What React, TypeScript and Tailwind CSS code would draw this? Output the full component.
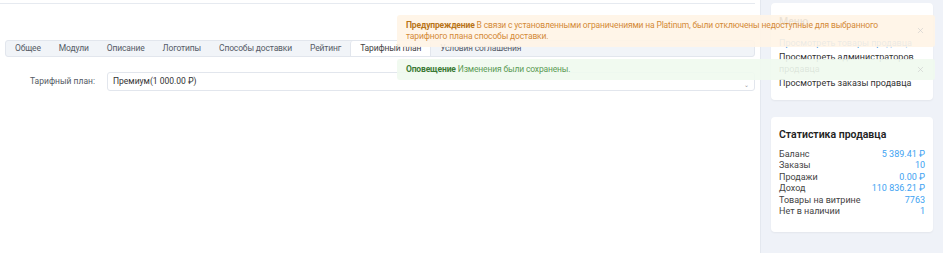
import { X } from 'lucide-react';

const tabs = ['Общее', 'Модули', 'Описание', 'Логотипы', 'Способы доставки', 'Рейтинг', 'Тарифный план', 'Условия соглашения'];

const stats = [
  { label: 'Баланс', value: '5 389.41 ₽' },
  { label: 'Заказы', value: '10' },
  { label: 'Продажи', value: '0.00 ₽' },
  { label: 'Доход', value: '110 836.21 ₽' },
  { label: 'Товары на витрине', value: '7763' },
  { label: 'Нет в наличии', value: '1' },
];

const App = () => {
  return (
    <div className="relative w-[943px] h-[265px] bg-white flex items-start overflow-hidden" style={{ fontFamily: 'Roboto, "Noto Sans", sans-serif' }}>
      {/* Main panel */}
      <div className="w-[760px] h-[253px] pt-[3px] pr-[5px]">
        <div className="h-full border-t border-[#e6eaf0] pt-[36px] pl-[5px]">
          {/* Tabs */}
          <div className="flex h-[17px] items-stretch bg-[#f1f4f8] border border-[#e2e6ed] rounded-[3px] text-[8.5px] tracking-[-0.15px] text-[#555b66]">
            {tabs.map((t) => (
              <div
                key={t}
                className={`px-[9px] flex items-center leading-none whitespace-nowrap ${
                  t === 'Тарифный план' ? 'bg-white rounded-t-[3px] border-x border-[#e2e6ed] text-[#444]' : ''
                }`}
              >
                {t}
              </div>
            ))}
          </div>

          {/* Form row */}
          <div className="flex items-center mt-[15px]">
            <div className="w-[90px] text-right text-[8.5px] text-[#555b66]">Тарифный план:</div>
            <div className="ml-[12px] flex-1 h-[19px] border border-[#e2e6ed] rounded-[3px] flex items-center justify-between pl-[5px] pr-[5px] text-[8.5px] text-[#333]">
              <span>Премиум(1 000.00 ₽)</span>
              <span className="text-[6px] text-[#999] mt-[6px]">⌄</span>
            </div>
          </div>
        </div>
      </div>

      {/* Sidebar */}
      <div className="w-[183px] h-[253px] bg-[#eff2f8] border-l border-[#e4e8ef] px-[10px] pt-[3px] flex flex-col gap-[17px]">
        <div className="bg-white rounded-[4px] shadow-[0_1px_2px_rgba(0,0,0,0.05)] h-[97px] px-[8px] pt-[13px] text-[9px] text-[#333] leading-[12px]">
          <div className="text-[10.5px] font-medium text-[#333] mb-[9px]">Меню</div>
          <div className="text-[#3b8fd9] mb-[2px]">Просмотреть товары продавца</div>
          <div className="mb-[2px]">Просмотреть администраторов продавца</div>
          <div>Просмотреть заказы продавца</div>
        </div>
        <div className="bg-white rounded-[4px] shadow-[0_1px_2px_rgba(0,0,0,0.05)] h-[115px] px-[8px] pt-[10px] pb-[8px] text-[9px] text-[#444]">
          <div className="text-[10.5px] font-semibold text-[#222] mb-[6px]">Статистика продавца</div>
          {stats.map((s) => (
            <div key={s.label} className="flex justify-between leading-[11.5px]">
              <span>{s.label}</span>
              <span className="text-[#3ea2f2]">{s.value}</span>
            </div>
          ))}
        </div>
      </div>

      {/* Toasts */}
      <div className="absolute left-[397px] top-[15px] w-[538px] flex flex-col gap-[12px] text-[8.5px] tracking-[-0.15px]">
        <div className="bg-[#fff4e6]/90 rounded-[3px] pl-[9px] pr-[10px] py-[5px] flex justify-between leading-[11px]">
          <div className="text-[#d48a37] w-[490px]">
            <span className="font-bold text-[#b97418]">Предупреждение</span> В связи с установленными ограничениями на Platinum, были отключены недоступные для выбранного тарифного плана способы доставки.
          </div>
          <X className="w-[9px] h-[9px] mt-[6px] text-[#c9c9c9] shrink-0" strokeWidth={1.5} />
        </div>
        <div className="bg-[#f0f9ee]/90 rounded-[3px] pl-[9px] pr-[10px] h-[21px] flex items-center justify-between">
          <div className="text-[#5c9a55]">
            <span className="font-bold text-[#3b7a35]">Оповещение</span> Изменения были сохранены.
          </div>
          <X className="w-[9px] h-[9px] text-[#c9c9c9] shrink-0" strokeWidth={1.5} />
        </div>
      </div>
    </div>
  );
};

export default App;
